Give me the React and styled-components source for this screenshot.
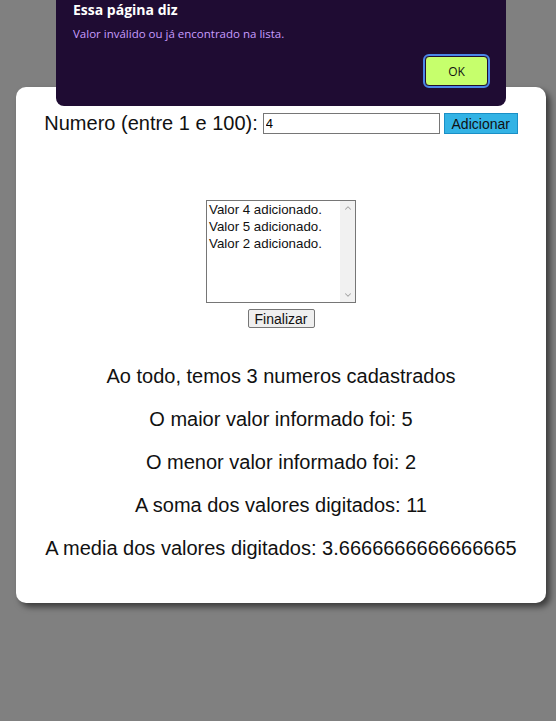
import React from 'react';
import styled, { createGlobalStyle } from 'styled-components';
import { ChevronUp, ChevronDown } from 'lucide-react';

const GlobalStyle = createGlobalStyle`
  html, body {
    margin: 0;
    padding: 0;
    background: #808080;
  }
  body {
    font-family: "Liberation Sans", Arial, sans-serif;
    min-height: 721px;
  }
`;

const Page = styled.div`
  position: relative;
  padding: 87px 10px 40px 16px;
`;

const Card = styled.main`
  background: #fff;
  border-radius: 10px;
  box-shadow: 4px 4px 6px rgba(0, 0, 0, 0.55);
  padding: 26px 0 43px;
  display: flex;
  flex-direction: column;
  align-items: center;
  color: #111;
`;

const InputRow = styled.div`
  display: flex;
  align-items: center;
  font-size: 20px;
  height: 21px;
`;

const Label = styled.label`
  margin-right: 5px;
`;

const NumberInput = styled.input`
  box-sizing: border-box;
  width: 177px;
  height: 21px;
  border: 1px solid #767676;
  padding: 1px 2px;
  font-family: "Liberation Sans", Arial, sans-serif;
  font-size: 13px;
  color: #000;
`;

const AddButton = styled.button`
  box-sizing: border-box;
  margin-left: 4px;
  width: 74px;
  height: 21px;
  padding: 0;
  background: #33b3e5;
  border: 1px solid #1a8fc6;
  font-family: "Liberation Sans", Arial, sans-serif;
  font-size: 14px;
  color: #111;
`;

const ListBox = styled.div`
  box-sizing: border-box;
  margin-top: 66px;
  width: 150px;
  height: 103px;
  border: 1px solid #767676;
  display: flex;
  background: #fff;
`;

const ListItems = styled.div`
  flex: 1;
  padding: 0 2px;
  font-size: 13.3px;
  line-height: 17px;
  color: #111;
`;

const ScrollTrack = styled.div`
  width: 15px;
  background: #f1f1f1;
  display: flex;
  flex-direction: column;
  justify-content: space-between;
  align-items: center;
  color: #a3a3a3;
  padding: 2px 0;
`;

const FinishButton = styled.button`
  box-sizing: border-box;
  margin-top: 6px;
  width: 67px;
  height: 19px;
  padding: 0;
  background: #efefef;
  border: 1px solid #767676;
  border-radius: 2px;
  font-family: "Liberation Sans", Arial, sans-serif;
  font-size: 14px;
  color: #111;
`;

const Results = styled.div`
  margin-top: 37px;
  display: flex;
  flex-direction: column;
  align-items: center;
  gap: 20px;
`;

const Line = styled.p`
  margin: 0;
  font-size: 20px;
  line-height: 23px;
`;

const Dialog = styled.div`
  position: absolute;
  top: 0;
  left: 56px;
  width: 450px;
  height: 106px;
  box-sizing: border-box;
  background: #1f0c33;
  border-radius: 0 0 8px 8px;
  padding: 1px 17px 0;
  font-family: "Open Sans", "Noto Sans", sans-serif;
`;

const DialogTitle = styled.div`
  color: #fff;
  font-weight: 700;
  font-size: 14px;
  line-height: 18px;
`;

const DialogMessage = styled.div`
  margin-top: 7px;
  color: #c79cff;
  font-size: 11.5px;
  line-height: 15px;
`;

const DialogActions = styled.div`
  display: flex;
  justify-content: flex-end;
  margin-top: 15px;
  padding-right: 1px;
`;

const OkButton = styled.button`
  box-sizing: border-box;
  width: 63px;
  height: 30px;
  background: #c6ff6c;
  border: 1px solid #1f0c33;
  outline: 2px solid #4a86e8;
  outline-offset: 0;
  border-radius: 4px;
  font-family: "Open Sans", "Noto Sans", sans-serif;
  font-size: 12px;
  color: #111;
`;

const values = [4, 5, 2];

export default function App() {
  const soma = values.reduce((a, b) => a + b, 0);
  const media = soma / values.length;

  return (
    <>
      <GlobalStyle />
      <Page>
        <Card>
          <InputRow>
            <Label htmlFor="num">Numero (entre 1 e 100):</Label>
            <NumberInput id="num" type="text" defaultValue="4" />
            <AddButton>Adicionar</AddButton>
          </InputRow>
          <ListBox>
            <ListItems>
              {values.map((v) => (
                <div key={v}>Valor {v} adicionado.</div>
              ))}
            </ListItems>
            <ScrollTrack>
              <ChevronUp size={10} strokeWidth={2.5} />
              <ChevronDown size={10} strokeWidth={2.5} />
            </ScrollTrack>
          </ListBox>
          <FinishButton>Finalizar</FinishButton>
          <Results>
            <Line>Ao todo, temos {values.length} numeros cadastrados</Line>
            <Line>O maior valor informado foi: {Math.max(...values)}</Line>
            <Line>O menor valor informado foi: {Math.min(...values)}</Line>
            <Line>A soma dos valores digitados: {soma}</Line>
            <Line>A media dos valores digitados: {String(media)}</Line>
          </Results>
        </Card>
        <Dialog>
          <DialogTitle>Essa página diz</DialogTitle>
          <DialogMessage>Valor inválido ou já encontrado na lista.</DialogMessage>
          <DialogActions>
            <OkButton>OK</OkButton>
          </DialogActions>
        </Dialog>
      </Page>
    </>
  );
}
